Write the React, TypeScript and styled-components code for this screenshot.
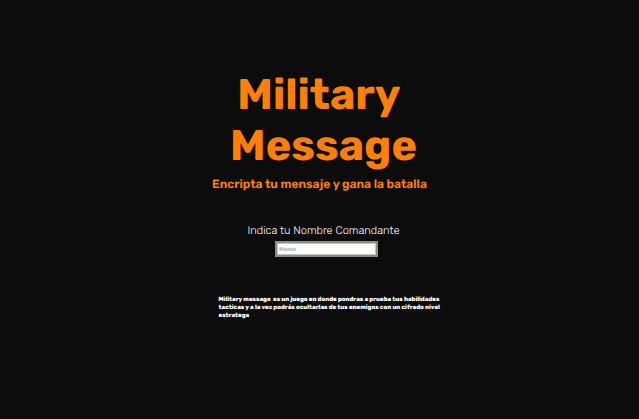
import React from "react";
import styled, { createGlobalStyle } from "styled-components";

const GlobalStyle = createGlobalStyle`
  body { margin: 0; background: #0c0c0c; }
  *, *::before, *::after { box-sizing: border-box; }
`;

const Page = styled.main`
  min-height: 100vh;
  display: flex;
  flex-direction: column;
  align-items: center;
  padding: 69px 16px 24px;
  background: #0c0c0c;
  color: #fff;
  font-family: Rubik, Inter, "Open Sans", sans-serif;
  text-rendering: geometricPrecision;
`;

const Title = styled.h1`
  margin: 0;
  padding-left: 8px;
  color: #fc7f08;
  font-size: 43px;
  line-height: 51px;
  font-weight: 700;
  text-align: center;
`;

const Tagline = styled.p`
  margin: 5px 0 0;
  color: #fc7f08;
  font-size: 12px;
  line-height: 16px;
  font-weight: 600;
  text-align: center;
`;

const Form = styled.form`
  display: flex;
  flex-direction: column;
  align-items: center;
  gap: 2px;
  margin-top: 31px;
  padding-left: 8px;
`;

const Label = styled.label`
  font-size: 11px;
  line-height: 16px;
  font-weight: 300;
`;

const NameInput = styled.input`
  width: 103px;
  height: 16px;
  margin-left: 6px;
  padding: 0 2px;
  border: 2px solid #8c8c88;
  outline: 0;
  background: #fff;
  box-shadow: inset 0 0 0 1px #c4c4c0;
  color: #222;
  font-family: inherit;
  font-size: 6px;
  font-weight: 800;
  text-rendering: inherit;
  &::placeholder { color: #c0c0c0; opacity: 1; }
`;

const Description = styled.p`
  margin: 38px 0 0;
  padding-left: 24px;
  max-width: 250px;
  font-size: 6px;
  line-height: 8px;
  font-weight: 800;
  white-space: pre-wrap;
`;

export default function App() {
  return (
    <>
      <GlobalStyle />
      <Page>
        <Title>Military&nbsp;<br />Message</Title>
        <Tagline>Encripta tu mensaje y gana la batalla</Tagline>
        <Form>
          <Label htmlFor="name">Indica tu Nombre Comandante</Label>
          <NameInput id="name" type="text" placeholder="Name" />
        </Form>
        <Description>{"Military message  es un juego en donde pondras a prueba tus habilidades tacticas y a la vez podrás ocultarlas de tus enemigos con un cifrado nivel estratega"}</Description>
      </Page>
    </>
  );
}
